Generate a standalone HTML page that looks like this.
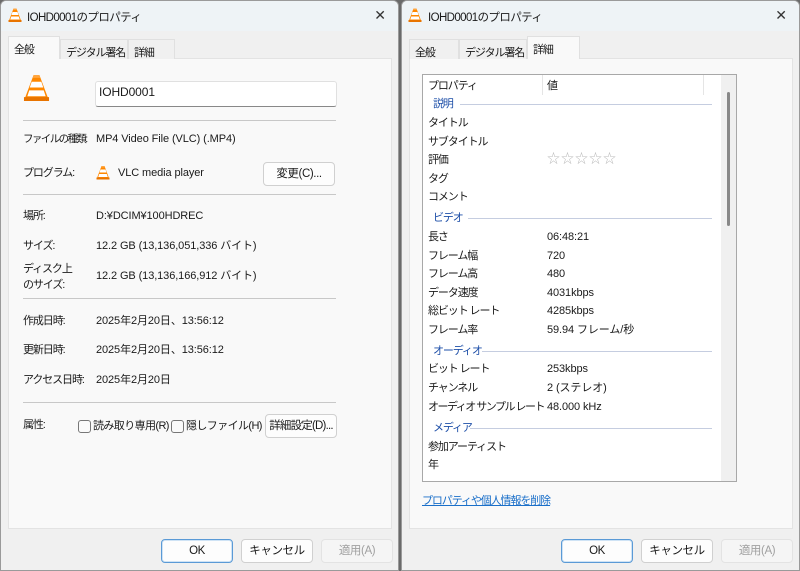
<!DOCTYPE html>
<html><head><meta charset="utf-8"><style>
*{margin:0;padding:0;box-sizing:border-box}
body{width:800px;height:571px;background:#6a6a6a;font-family:"Liberation Sans","Noto Sans CJK JP",sans-serif;font-size:11px;letter-spacing:-1.1px;color:#1a1a1a;position:relative;overflow:hidden}
.l{letter-spacing:-0.1px}
.win{position:absolute;top:0;width:399px;height:571px;background:#f0f0f0;border:1px solid #9a9a9a;border-radius:6px 6px 0 0;overflow:hidden}
.title{position:absolute;left:0;top:0;right:0;height:30px;background:#eef3f6}
.title span{position:absolute;left:26px;top:8px;letter-spacing:-0.6px;font-size:11.5px}
.x{position:absolute;right:12px;top:6px;font-size:14px;color:#333;letter-spacing:0}
.panel{position:absolute;left:7px;top:57px;width:384px;height:471px;background:#f9f9f9;border:1px solid #e3e3e3}
.tab{position:absolute;top:38px;height:20px;background:#f0f0f0;border:1px solid #e0e0e0;border-bottom:none;padding:4px 0 0 5px;white-space:nowrap;overflow:hidden;font-size:11px;letter-spacing:-1.1px}
.tab.sel{top:35px;height:23px;background:#f9f9f9;z-index:2}
.a{position:absolute;white-space:nowrap;line-height:16px}
.sep{position:absolute;height:1px;background:#c8c8c8}
.btn{position:absolute;height:24px;background:#fdfdfd;border:1px solid #d0d0d0;border-radius:4px;text-align:center;line-height:22px;white-space:nowrap;letter-spacing:-0.4px;font-size:11.5px}
.btn.ok{border:1px solid #5a9ad6;box-shadow:inset 0 0 0 1px #cfe3f5}
.btn.dis{background:#f5f5f5;color:#a0a0a0;border-color:#e3e3e3}
.cb{position:absolute;width:13px;height:13px;border:1px solid #777;border-radius:3px;background:#fafafa}
.sec{position:absolute;color:#1e4fa8;line-height:16px}
.secl{position:absolute;height:1px;background:#c5cde0}
</style></head><body>
<svg width="0" height="0" style="position:absolute"><defs>
<symbol id="cone" viewBox="0 0 28 30"><path d="M11 1h6l9 24H2z" fill="#ff8800"/><path d="M9 8h10l2 6H7z" fill="#fff"/><path d="M6.5 17h15l2 6h-19z" fill="#fff"/><path d="M1 24h26v4H1z" fill="#e87400"/><path d="M11 1h6l1 3H10z" fill="#ffa640"/></symbol>
</defs></svg>

<div class="win" style="left:0">
<div class="title"><svg style="position:absolute;left:7px;top:7px" width="14" height="15"><use href="#cone"/></svg><span>IOHD0001のプロパティ</span><div class="x">✕</div></div>
<div class="panel"></div>
<div class="tab sel" style="left:7px;width:52px">全般</div>
<div class="tab" style="left:59px;width:68px">デジタル署名</div>
<div class="tab" style="left:127px;width:47px">詳細</div>
<svg style="position:absolute;left:22px;top:73px" width="27" height="29"><use href="#cone"/></svg>
<div style="position:absolute;left:94px;top:80px;width:242px;height:26px;background:#fff;border:1px solid #e0e0e0;border-bottom:1px solid #888;border-radius:3px"></div>
<div class="a l" style="left:98px;top:83px;font-size:12px">IOHD0001</div>
<div class="sep" style="left:22px;top:119px;width:313px"></div>
<div class="a" style="left:22px;top:130px;letter-spacing:-1.6px;font-size:10.5px">ファイルの種類:</div><div class="a l" style="left:95px;top:130px">MP4 Video File (VLC) (.MP4)</div>
<div class="a" style="left:22px;top:164px">プログラム:</div>
<svg style="position:absolute;left:95px;top:164px" width="14" height="16"><use href="#cone"/></svg>
<div class="a l" style="left:117px;top:164px">VLC media player</div>
<div class="btn" style="left:262px;top:161px;width:72px">変更(C)...</div>
<div class="sep" style="left:22px;top:193px;width:313px"></div>
<div class="a" style="left:22px;top:207px">場所:</div><div class="a l" style="left:95px;top:207px">D:¥DCIM¥100HDREC</div>
<div class="a" style="left:22px;top:237px">サイズ:</div><div class="a l" style="left:95px;top:237px">12.2 GB (13,136,051,336 バイト)</div>
<div class="a" style="left:22px;top:260px">ディスク上<br>のサイズ:</div><div class="a l" style="left:95px;top:267px">12.2 GB (13,136,166,912 バイト)</div>
<div class="sep" style="left:22px;top:297px;width:313px"></div>
<div class="a" style="left:22px;top:312px">作成日時:</div><div class="a l" style="left:95px;top:312px">2025年2月20日、13:56:12</div>
<div class="a" style="left:22px;top:341px">更新日時:</div><div class="a l" style="left:95px;top:341px">2025年2月20日、13:56:12</div>
<div class="a" style="left:22px;top:371px">アクセス日時:</div><div class="a l" style="left:95px;top:371px">2025年2月20日</div>
<div class="sep" style="left:22px;top:401px;width:313px"></div>
<div class="a" style="left:22px;top:416px">属性:</div>
<div class="cb" style="left:77px;top:419px"></div><div class="a" style="left:92px;top:417px;letter-spacing:-0.6px">読み取り専用(R)</div>
<div class="cb" style="left:170px;top:419px"></div><div class="a" style="left:185px;top:417px;letter-spacing:-0.6px">隠しファイル(H)</div>
<div class="btn" style="left:264px;top:413px;width:72px;letter-spacing:-0.8px">詳細設定(D)...</div>
<div class="btn ok" style="left:160px;top:538px;width:72px">OK</div>
<div class="btn" style="left:240px;top:538px;width:72px">キャンセル</div>
<div class="btn dis" style="left:320px;top:538px;width:72px">適用(A)</div>
</div>

<div class="win" style="left:401px">
<div class="title"><svg style="position:absolute;left:6px;top:7px" width="14" height="15"><use href="#cone"/></svg><span>IOHD0001のプロパティ</span><div class="x">✕</div></div>
<div class="panel"></div>
<div class="tab" style="left:7px;width:50px">全般</div>
<div class="tab" style="left:57px;width:68px">デジタル署名</div>
<div class="tab sel" style="left:125px;width:53px">詳細</div>
<div style="position:absolute;left:20px;top:73px;width:315px;height:408px;background:#fff;border:1px solid #a8a8a8;overflow:hidden">
 <div style="position:absolute;right:0;top:0;width:15px;height:100%;background:#f0f0f0"></div>
 <div style="position:absolute;right:6px;top:17px;width:3px;height:134px;background:#888;border-radius:2px"></div>
 <div style="position:absolute;left:119px;top:0;width:1px;height:20px;background:#e5e5e5"></div>
 <div style="position:absolute;left:280px;top:0;width:1px;height:20px;background:#e5e5e5"></div>
</div>
<div class="a" style="left:26px;top:77px">プロパティ</div><div class="a" style="left:145px;top:77px">値</div>
<div class="sec" style="left:31px;top:95px">説明</div><div class="secl" style="left:58px;top:103px;width:252px"></div>
<div class="a" style="left:26px;top:114px">タイトル</div>
<div class="a" style="left:26px;top:133px">サブタイトル</div>
<div class="a" style="left:26px;top:151px">評価</div><div class="a" style="left:145px;top:150px;color:#bbb;font-size:13px;letter-spacing:1px">☆☆☆☆☆</div>
<div class="a" style="left:26px;top:170px">タグ</div>
<div class="a" style="left:26px;top:188px">コメント</div>
<div class="sec" style="left:31px;top:209px">ビデオ</div><div class="secl" style="left:66px;top:217px;width:244px"></div>
<div class="a" style="left:26px;top:228px">長さ</div><div class="a l" style="left:145px;top:228px">06:48:21</div>
<div class="a" style="left:26px;top:247px">フレーム幅</div><div class="a l" style="left:145px;top:247px">720</div>
<div class="a" style="left:26px;top:265px">フレーム高</div><div class="a l" style="left:145px;top:265px">480</div>
<div class="a" style="left:26px;top:284px">データ速度</div><div class="a l" style="left:145px;top:284px">4031kbps</div>
<div class="a" style="left:26px;top:302px">総ビット レート</div><div class="a l" style="left:145px;top:302px">4285kbps</div>
<div class="a" style="left:26px;top:321px">フレーム率</div><div class="a l" style="left:145px;top:321px">59.94 フレーム/秒</div>
<div class="sec" style="left:31px;top:342px">オーディオ</div><div class="secl" style="left:80px;top:350px;width:230px"></div>
<div class="a" style="left:26px;top:360px">ビット レート</div><div class="a l" style="left:145px;top:360px">253kbps</div>
<div class="a" style="left:26px;top:379px">チャンネル</div><div class="a l" style="left:145px;top:379px">2 (ステレオ)</div>
<div class="a" style="left:26px;top:398px;letter-spacing:-1.5px">オーディオ サンプル レート</div><div class="a l" style="left:145px;top:398px">48.000 kHz</div>
<div class="sec" style="left:31px;top:419px">メディア</div><div class="secl" style="left:68px;top:427px;width:242px"></div>
<div class="a" style="left:26px;top:438px">参加アーティスト</div>
<div class="a" style="left:26px;top:456px">年</div>
<div class="a" style="left:20px;top:492px;color:#1a6fc9;text-decoration:underline">プロパティや個人情報を削除</div>
<div class="btn ok" style="left:159px;top:538px;width:72px">OK</div>
<div class="btn" style="left:239px;top:538px;width:72px">キャンセル</div>
<div class="btn dis" style="left:319px;top:538px;width:72px">適用(A)</div>
</div>
</body></html>
